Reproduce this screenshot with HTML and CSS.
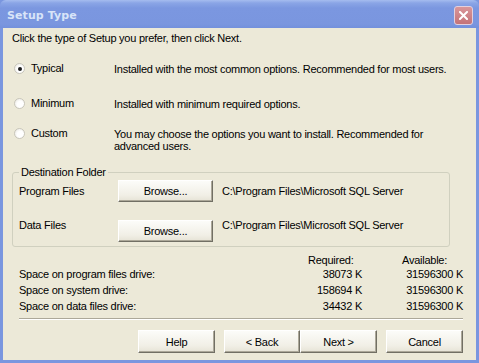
FILE: index.html
```html
<!DOCTYPE html>
<html lang="en">
<head>
  <meta charset="UTF-8">
  <title>Setup Type</title>
  <link rel="stylesheet" href="styles.css">
</head>
<body>
<div class="window">
  <div class="titlebar">
    <span class="title">Setup Type</span>
    <span class="close">
      <svg width="9" height="9" viewBox="0 0 9 9"><path d="M1 1 L8 8 M8 1 L1 8" stroke="#fff" stroke-width="2" stroke-linecap="square"/></svg>
    </span>
  </div>

  <div class="content">
    <p class="intro">Click the type of Setup you prefer, then click Next.</p>

    <div class="option typical">
      <span class="radio checked"></span>
      <span class="option-name">Typical</span>
      <span class="option-desc">Installed with the most common options. Recommended for most users.</span>
    </div>
    <div class="option minimum">
      <span class="radio"></span>
      <span class="option-name">Minimum</span>
      <span class="option-desc">Installed with minimum required options.</span>
    </div>
    <div class="option custom">
      <span class="radio"></span>
      <span class="option-name">Custom</span>
      <span class="option-desc">You may choose the options you want to install. Recommended for advanced users.</span>
    </div>

    <fieldset class="dest">
      <legend>Destination Folder</legend>
      <div class="folder-row program">
        <span class="folder-label">Program Files</span>
        <button class="btn browse">Browse...</button>
        <span class="folder-path">C:\Program Files\Microsoft SQL Server</span>
      </div>
      <div class="folder-row data">
        <span class="folder-label">Data Files</span>
        <button class="btn browse">Browse...</button>
        <span class="folder-path">C:\Program Files\Microsoft SQL Server</span>
      </div>
    </fieldset>

    <div class="space">
      <span></span>
      <span class="head">Required:</span>
      <span class="head">Available:</span>

      <span>Space on program files drive:</span>
      <span class="num">38073 K</span>
      <span class="num">31596300 K</span>

      <span>Space on system drive:</span>
      <span class="num">158694 K</span>
      <span class="num">31596300 K</span>

      <span>Space on data files drive:</span>
      <span class="num">34432 K</span>
      <span class="num">31596300 K</span>
    </div>

    <div class="separator"></div>

    <div class="buttons">
      <button class="btn">Help</button>
      <div class="pair">
        <button class="btn">&lt; Back</button>
        <button class="btn">Next &gt;</button>
      </div>
      <button class="btn">Cancel</button>
    </div>
  </div>
</div>
</body>
</html>
```

FILE: styles.css
```css
body {
  margin: 0;
  font-family: "Liberation Sans", Arial, sans-serif;
  font-size: 11px;
  letter-spacing: -0.25px;
  color: #000;
  background-color: #ece9d8;
}
.window {
  width: 479px;
  height: 363px;
  box-sizing: border-box;
  background-color: #7a96df;
  padding: 0 3px 3px 3px;
  display: flex;
  flex-direction: column;
}
.titlebar {
  height: 28px;
  margin: 0 -3px;
  padding: 0 6px 0 7px;
  display: flex;
  align-items: center;
  justify-content: space-between;
  background: linear-gradient(#a5bcef 0px, #8aa5e6 3px, #7b97e0 8px, #7a96df 24px, #7390dc 28px);
  border-radius: 6px 6px 0 0;
}
.title {
  font-family: "DejaVu Sans", sans-serif;
  font-weight: bold;
  font-size: 11px;
  letter-spacing: 0.1px;
  color: #d8e4f8;
  padding-top: 2px;
}
.close {
  width: 17px;
  height: 17px;
  margin-top: 2px;
  border: 1px solid #e3d0de;
  border-radius: 3px;
  background: linear-gradient(#d9969a, #c47378);
  display: flex;
  align-items: center;
  justify-content: center;
}
.content {
  flex: 1;
  background-color: #ece9d8;
  padding: 4px 13px 0 9px;
}
.intro {
  margin: 0;
  line-height: 13px;
}
.option {
  display: grid;
  grid-template-columns: 17px 83px 1fr;
  align-items: start;
  line-height: 13px;
  margin-left: 2px;
}
.option.typical { margin-top: 17px; }
.option.minimum { margin-top: 22px; }
.option.custom { margin-top: 17px; }
.option-desc {
  max-width: 340px;
  line-height: 12px;
  padding-top: 1px;
}
.radio {
  width: 11px;
  height: 11px;
  box-sizing: border-box;
  margin-top: 1px;
  border: 1px solid #c8c6bb;
  border-radius: 50%;
  background: radial-gradient(circle at 60% 60%, #fff 40%, #e6e4dc 100%);
  display: flex;
  align-items: center;
  justify-content: center;
}
.radio.checked::after {
  content: "";
  width: 4px;
  height: 4px;
  border-radius: 50%;
  background-color: #1d1d1d;
}
.dest {
  margin: 14px 0 0 0;
  width: 438px;
  box-sizing: border-box;
  padding: 0 6px 4px 6px;
  border: 1px solid #d0d0bf;
  border-radius: 3px;
}
.dest legend {
  padding: 0 2px;
  line-height: 13px;
}
.folder-row {
  display: grid;
  grid-template-columns: 99px 95px 1fr;
  align-items: start;
  line-height: 13px;
}
.folder-row.program { margin-top: 1px; }
.folder-row.data { margin-top: 18px; }
.folder-row.program .folder-label,
.folder-row.program .folder-path { padding-top: 5px; }
.folder-row.data .folder-label,
.folder-row.data .folder-path { margin-top: -1px; }
.folder-path { padding-left: 9px; }
.btn {
  font-family: "Liberation Sans", Arial, sans-serif;
  font-size: 11px;
  letter-spacing: -0.25px;
  color: #000;
  height: 22px;
  padding: 0;
  box-sizing: border-box;
  background: linear-gradient(#fcfcf9, #f1efe6 70%, #e6e3d6);
  border: 1px solid;
  border-color: #fff #716f64 #716f64 #fff;
  box-shadow: inset -1px -1px 0 #aca899;
}
.browse { width: 95px; }
.space {
  display: grid;
  grid-template-columns: 289px 54px 40px 61px;
  grid-template-rows: 13px repeat(3, 16px);
  align-items: center;
  margin: 6px 0 0 7px;
  white-space: nowrap;
}
.space .head:nth-of-type(3n) { grid-column: 4; }
.space .num:nth-child(3n) { grid-column: 4; }
.space .num { text-align: right; }
.separator {
  margin: 4px 0 0 7px;
  width: 444px;
  border-top: 1px solid #aca899;
  border-bottom: 1px solid #fff;
}
.buttons {
  display: flex;
  justify-content: flex-end;
  gap: 9px;
  margin-top: 10px;
  width: 451px;
}
.buttons .btn {
  width: 77px;
  height: 23px;
}
.pair {
  display: flex;
}
.pair .btn { width: 76px; }
.pair .btn + .btn { width: 77px; }
```
